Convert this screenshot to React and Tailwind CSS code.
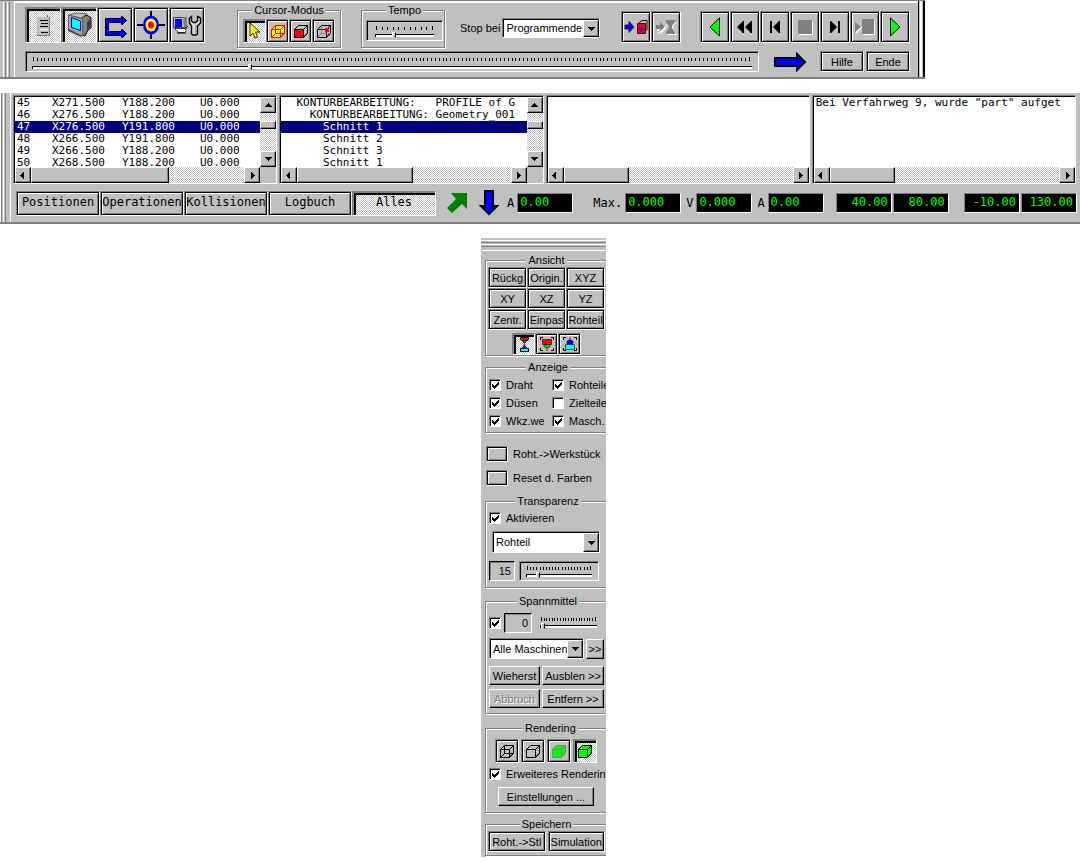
import React from "react";

const SANS = "font-['Liberation_Sans',sans-serif] text-[11px] leading-[14px]";
const MONO = "font-['DejaVu_Sans_Mono','Liberation_Mono',monospace] text-[12px] leading-[12px]";
const FRAME = "border border-t-[#808080] border-l-[#808080] border-b-white border-r-white";
const DITHER = "bg-[repeating-conic-gradient(#fff_0_25%,#c0c0c0_0_50%)] bg-[length:2px_2px]";
const UP = FRAME + " bg-[#c0c0c0] shadow-[inset_0_0_0_1px_#000,inset_2px_2px_0_#fff,inset_-2px_-2px_0_#808080]";
const DOWN = FRAME + " shadow-[inset_1px_1px_0_#808080,inset_3px_3px_0_#000]";
const SUNKEN = FRAME + " shadow-[inset_1px_1px_0_#000]";
const RAISED =
  "border border-t-white border-l-white border-b-black border-r-black bg-[#c0c0c0] shadow-[inset_-1px_-1px_0_#808080]";

function Btn({ pressed, className = "", children, ...rest }) {
  return (
    <button
      type="button"
      className={`flex shrink-0 items-center justify-center overflow-hidden whitespace-nowrap ${
        pressed ? DOWN + " " + DITHER : UP
      } ${className}`}
      {...rest}
    >
      {children}
    </button>
  );
}

function Group({ title, className = "", children }) {
  return (
    <fieldset
      className={`border border-[#808080] shadow-[1px_1px_0_#fff,inset_1px_1px_0_#fff] ${className}`}
    >
      <legend className="mx-auto bg-[#c0c0c0] px-[2px]">{title}</legend>
      {children}
    </fieldset>
  );
}

function Slider({ label, ticks, value, className = "", gap = "gap-[2px]" }) {
  return (
    <div className={`flex flex-col ${gap} ${className}`}>
      <div className="flex h-[4px] items-end justify-between px-px" aria-hidden="true">
        {Array.from({ length: ticks }, (_, i) => (
          <span key={i} className="h-[3px] w-px bg-black first:h-[4px] last:h-[4px]" />
        ))}
      </div>
      <input
        type="range"
        aria-label={label}
        defaultValue={value}
        className="block h-[7px] w-full min-w-0 appearance-none bg-transparent [&::-webkit-slider-runnable-track]:h-[3px] [&::-webkit-slider-runnable-track]:border-t [&::-webkit-slider-runnable-track]:border-l [&::-webkit-slider-runnable-track]:border-black [&::-webkit-slider-runnable-track]:bg-white [&::-webkit-slider-thumb]:-mt-[3px] [&::-webkit-slider-thumb]:h-[6px] [&::-webkit-slider-thumb]:w-[4px] [&::-webkit-slider-thumb]:appearance-none [&::-webkit-slider-thumb]:border [&::-webkit-slider-thumb]:border-t-white [&::-webkit-slider-thumb]:border-l-white [&::-webkit-slider-thumb]:border-r-black [&::-webkit-slider-thumb]:border-b-[#c0c0c0] [&::-webkit-slider-thumb]:bg-[#c0c0c0]"
      />
    </div>
  );
}

function Select({ id, label, value, className = "" }) {
  return (
    <div className={`relative ${SUNKEN} bg-white ${className}`}>
      <select
        id={id}
        aria-label={label}
        className="block h-full w-full appearance-none bg-transparent pr-4 pl-[3px] outline-none"
      >
        <option>{value}</option>
      </select>
      <span
        aria-hidden="true"
        className={`pointer-events-none absolute top-px right-0 bottom-0 flex w-4 items-center justify-center ${RAISED}`}
      >
        <svg width="7" height="4" viewBox="0 0 7 4" shapeRendering="crispEdges">
          <path d="M0 0h7v1H6v1H5v1H4v1H3V3H2V2H1V1H0z" />
        </svg>
      </span>
    </div>
  );
}

function Check({ label, checked, className = "" }) {
  return (
    <label className={`flex items-center gap-[5px] overflow-hidden whitespace-nowrap ${className}`}>
      <span className="relative flex h-3 w-3 shrink-0">
        <input
          type="checkbox"
          defaultChecked={checked}
          aria-label={label ? undefined : "Spannmittel"}
          className="peer h-3 w-3 appearance-none border border-t-[#808080] border-l-[#808080] border-b-white border-r-white bg-white shadow-[inset_1px_1px_0_#000]"
        />
        <svg
          width="7"
          height="7"
          viewBox="0 0 7 7"
          shapeRendering="crispEdges"
          className="pointer-events-none absolute top-[3px] left-[3px] hidden peer-checked:block"
        >
          <path d="M0 2h1v1h1v1h1V3h1V2h1V1h1V0h1v3H6v1H5v1H4v1H3v1H2V6H1V5H0z" />
        </svg>
      </span>
      {label && <span>{label}</span>}
    </label>
  );
}

/* ---------- icons ---------- */

const DocIcon = () => (
  <svg width="32" height="32" viewBox="0 0 32 32" shapeRendering="crispEdges">
    <path fill="#c0c0c0" d="M10 8h13v19H10z" />
    <path fill="#808080" d="M10 25h1v2h-1zM22 8h1v19h-1zM11 26h12v1H11z" />
    <path fill="#008080" d="M20 6h1v2h-1z" />
    <path d="M13 11h8v1h-8zM14 14h7v1h-7zM13 17h8v1h-8zM14 23h7v1h-7z" />
    <path fill="#fff" d="M13 20h8v1h-8z" />
  </svg>
);
const MonitorIcon = () => (
  <svg width="32" height="32" viewBox="0 0 32 32">
    <path fill="#808080" stroke="#000" d="M18 9l6-3 4 3v10l-3 2-3 6-4-2z" />
    <path fill="#c0c0c0" stroke="#606060" d="M6 6l7-2 11 1-6 4z" />
    <path fill="#a8a8a8" stroke="#606060" d="M5.500 6l14 4v16.500l-3-.5-11-6z" />
    <path fill="#404040" d="M5 20l14 7-1 1L5 22zM24 13l3-3v8l-3 3z" />
    <path fill="#0ff" stroke="#0000c0" d="M8.500 8.500l9 3.500v9.500l-9-3z" />
  </svg>
);
const LoopIcon = () => (
  <svg width="32" height="32" viewBox="0 0 32 32">
    <path
      fill="#00f"
      stroke="#000"
      d="M6.500 9.500h16v-2h1l4 4-4 4h-1v-2H9.500v9h13v-2h1l4 4-4 4h-1v-2h-16z"
    />
  </svg>
);
const TargetIcon = () => (
  <svg width="32" height="32" viewBox="0 0 32 32">
    <path d="M15 2h2v28h-2zM2 15h28v2H2z" />
    <ellipse cx="16" cy="16" rx="8" ry="9.500" fill="#00f" />
    <ellipse cx="16" cy="16" rx="5.500" ry="6.500" fill="#ff0" />
    <ellipse cx="16" cy="16" rx="3" ry="3.500" fill="#f00" />
  </svg>
);
const SetupIcon = () => (
  <svg width="32" height="32" viewBox="0 0 32 32">
    <path fill="#c0c0c0" stroke="#404040" d="M2.500 8.500h10l3 2v8h-13z" />
    <path fill="#808080" d="M12 8h4v12h-3z" />
    <path fill="#00f" d="M4 10h7v8H4z" />
    <path fill="#fff" stroke="#404040" d="M3.500 19.500h10l2 2-2 2h-6z" />
    <path stroke="#000" strokeWidth="1" d="M6 24h9M13 20l4-3" fill="none" />
    <path
      fill="#d8d8d8"
      stroke="#000"
      strokeWidth="1.400"
      d="M18.500 9l2-1.500V12l2 1.500h2l2-1.500V7.500l3 1.500v5l-3 3v8l-1.500 1h-3L20.500 25v-8l-2-3z"
    />
    <path stroke="#808080" d="M25 16v9" />
  </svg>
);
const CursorIcon = () => (
  <svg width="12" height="18" viewBox="0 0 12 18">
    <path fill="#ff0" stroke="#000" strokeWidth=".8" d="M1 1v13l3-3 2 5 2.500-1-2-5H11z" />
  </svg>
);

function Cube({ size = 16, line = "#000", front = "none", sides = "none", hidden, children }) {
  return (
    <svg width={size} height={size} viewBox="0 0 16 16" fill="none" stroke={line} strokeLinejoin="round">
      <path fill={sides} d="M1.500 6.500l4-4h9v7.500l-4 4v-7.500z" />
      <path fill={front} d="M1.500 6.500h9v8h-9z" />
      <path d="M10.500 6.500l4-4M14.500 2.500v8l-4 4" />
      {hidden && <path stroke={hidden} d="M5.500 2.500v8h9M5.500 10.500l-4 4" />}
      {children}
    </svg>
  );
}

const StopPartIcon = () => (
  <svg width="24" height="16" viewBox="0 0 24 16">
    <path fill="#00f" stroke="#000" strokeWidth=".8" d="M1 6h4V2.500l5 5.500-5 5.500V10H1z" />
    <path fill="none" stroke="#000" d="M15 4l3-2.500h5v10" />
    <path fill="#f00" stroke="#000" strokeWidth=".8" d="M13.500 4.500h8v10h-8z" />
    <path stroke="#00f" d="M17.500 7v6M14.500 10h6" />
  </svg>
);
const StopToolIcon = () => (
  <svg width="22" height="17" viewBox="0 0 22 17">
    <path fill="#fff" d="M2 7h4V3.500L11 9l-5 6v-3H2zM12 3h9l-3 5 3 8h-9l3-7z" />
    <path fill="#808080" d="M1 6h4V2.500L10 8l-5 5v-3H1zM11 1h9v2l-3 4v2l3 4v2h-9v-2l3-4V7l-3-4z" />
    <path stroke="#fff" d="M3 15l9-9" />
  </svg>
);

const PlayBack = () => (
  <svg width="12" height="20" viewBox="0 0 12 20">
    <path fill="#0f0" stroke="#000" d="M10.500 1v18L1 10z" />
  </svg>
);
const PlayForward = () => (
  <svg width="12" height="20" viewBox="0 0 12 20">
    <path fill="#0f0" stroke="#000" d="M1.500 1v18L11 10z" />
  </svg>
);
const Rewind = () => (
  <svg width="16" height="12" viewBox="0 0 16 12">
    <path d="M0 6l6-6h1v12H6zM8 6l6-6h1v12h-1z" />
  </svg>
);
const StepBack = () => (
  <svg width="10" height="12" viewBox="0 0 10 12">
    <path d="M0 0h2v12H0zM3 6l6-6h1v12H9z" />
  </svg>
);
const StepForward = () => (
  <svg width="10" height="12" viewBox="0 0 10 12">
    <path d="M8 0h2v12H8zM7 6L1 0H0v12h1z" />
  </svg>
);
const StopIcon = () => (
  <svg width="15" height="15" viewBox="0 0 15 15" shapeRendering="crispEdges">
    <path fill="#fff" d="M1 1h14v14H1z" />
    <path fill="#808080" d="M0 0h14v14H0z" />
  </svg>
);
const SkipStopIcon = () => (
  <svg width="20" height="16" viewBox="0 0 20 16">
    <path fill="#fff" d="M8 1h12v15H8z" />
    <path fill="#808080" d="M0 3l6 5-6 5zM7 0h12v15H7z" />
    <path stroke="#fff" strokeWidth="1.500" d="M1 14l6-6" />
  </svg>
);
const BlueRight = () => (
  <svg width="34" height="20" viewBox="0 0 34 20">
    <path fill="#00f" stroke="#000" strokeWidth="2" d="M2 6h22V2l8 8-8 8v-4H2z" />
  </svg>
);
const BlueDown = () => (
  <svg width="20" height="26" viewBox="0 0 20 26">
    <path fill="#00f" stroke="#000" strokeWidth="2" d="M6 1h8v15h4l-8 8-8-8h4z" />
  </svg>
);
const GreenUp = () => (
  <svg width="22" height="20" viewBox="0 0 22 20">
    <path fill="#008000" d="M5 0h16v16l-5-5-10 9-5-5L10 6z" />
  </svg>
);

const GuidesIcon = () => (
  <svg width="14" height="18" viewBox="0 0 14 18">
    <path stroke="#f00" d="M7.500 6v6" />
    <path fill="#f00" stroke="#000" d="M3.500 2.500h8v2l-1.500 1H5l-1.500-1z" />
    <path fill="#0c0" stroke="#000" strokeWidth=".8" d="M5.500 5.500h4L8 8H7z" />
    <path fill="#00f" stroke="#000" strokeWidth=".8" d="M7 10.500h1l2 3H5z" />
    <path fill="#0ff" stroke="#000" d="M3.500 13.500h8v3h-8z" />
  </svg>
);
const corners = "M1.500 4V1.500H4M12 1.500h2.500V4M14.500 12v2.500H12M4 14.500H1.500V12";
const UpperGuideIcon = () => (
  <svg width="16" height="16" viewBox="0 0 16 16" fill="none">
    <path stroke="#000" d={corners} />
    <path fill="#f00" stroke="#000" strokeWidth=".6" d="M3.500 3.500h9v5h-9z" />
    <path fill="#0c0" stroke="#000" strokeWidth=".6" d="M5 8.500h6v2l-1.500 1.500h-3L5 10.500z" />
    <path stroke="#f00" d="M8 12v3" />
  </svg>
);
const LowerGuideIcon = () => (
  <svg width="16" height="16" viewBox="0 0 16 16" fill="none">
    <path stroke="#000" d={corners} />
    <path stroke="#f00" d="M8 1v3" />
    <path fill="#00f" stroke="#000" strokeWidth=".6" d="M5 8.500v-3L6.500 4h3L11 5.500v3z" />
    <path fill="#0ff" stroke="#000" strokeWidth=".6" d="M3.500 8.500h9v5h-9z" />
  </svg>
);

/* ---------- list panes ---------- */

const ARROWS = {
  up: "M4 2h1v1h1v1h1v1h1v1H1V5h1V4h1V3h1z",
  down: "M1 2h7v1H7v1H6v1H5v1H4V5H3V4H2V3H1z",
  left: "M5 1v7H4V7H3V6H2V5H1V4h1V3h1V2h1V1z",
  right: "M3 1v7h1V7h1V6h1V5h1V4H6V3H5V2H4V1z",
};
function ScrollBtn({ dir }) {
  return (
    <button
      type="button"
      aria-label={dir}
      className={`flex h-4 w-4 shrink-0 items-center justify-center ${RAISED}`}
    >
      <svg width="9" height="9" viewBox="0 0 9 9" shapeRendering="crispEdges">
        <path d={ARROWS[dir]} />
      </svg>
    </button>
  );
}

function Pane({ vertical, thumb, children }) {
  return (
    <section className={`min-w-0 flex-1 ${FRAME}`}>
      <div className="border-t border-l border-black">
        <div className="flex h-[70px] bg-white">
          <div className="min-w-0 flex-1 overflow-hidden text-[11px] leading-[12px] whitespace-pre">
            {children}
          </div>
          {vertical && (
            <div className={`flex w-4 shrink-0 flex-col ${DITHER}`}>
              <ScrollBtn dir="up" />
              <div className={`mt-2 h-2 ${RAISED}`} />
              <div className="flex-1" />
              <ScrollBtn dir="down" />
            </div>
          )}
        </div>
        <div className="flex bg-[#c0c0c0]">
          <div className={`flex min-w-0 flex-1 ${DITHER}`}>
            <ScrollBtn dir="left" />
            <div className={`h-4 ${thumb} ${RAISED}`} />
            <div className="flex-1" />
            <ScrollBtn dir="right" />
          </div>
          {vertical && <div className="w-4" />}
        </div>
      </div>
    </section>
  );
}

const POSITIONS = [
  ["45", "X271.500", "Y188.200", "U0.000"],
  ["46", "X276.500", "Y188.200", "U0.000"],
  ["47", "X276.500", "Y191.800", "U0.000"],
  ["48", "X266.500", "Y191.800", "U0.000"],
  ["49", "X266.500", "Y188.200", "U0.000"],
  ["50", "X268.500", "Y188.200", "U0.000"],
];
const OPERATIONS = [
  "  KONTURBEARBEITUNG:   PROFILE of G",
  "    KONTURBEARBEITUNG: Geometry_001",
  "      Schnitt 1",
  "      Schnitt 2",
  "      Schnitt 3",
  "      Schnitt 1",
];

function Readout({ id, label, value, right }) {
  return (
    <div className="flex items-center gap-[3px]">
      {label && <label htmlFor={id}>{label}</label>}
      <input
        id={id}
        readOnly
        aria-label={label ? undefined : id}
        value={value}
        className={`h-5 w-14 border border-t-[#808080] border-l-[#808080] border-b-white border-r-white bg-black pr-[3px] pb-[3px] pl-[2px] text-[#00ff00] outline-none ${
          right ? "text-right" : ""
        }`}
      />
    </div>
  );
}

function TopToolbar() {
  return (
    <header className="flex w-full max-w-[925px] border-t border-b-2 border-[#808080] bg-[#c0c0c0]">
      <div className="flex w-[15px] shrink-0 gap-px border-r border-white pt-px pl-[3px]">
        <span className="w-[3px] border-r border-l border-r-[#808080] border-l-white" />
        <span className="w-[3px] border-r border-l border-r-[#808080] border-l-white" />
      </div>
      <div className="flex min-w-0 flex-1 flex-col gap-[3px] border-t-2 border-white pr-2 pb-[5px] pl-[10px]">
        <div className="flex items-end">
          <div className="mb-[5px] flex">
            <Btn pressed className="h-9 w-9" aria-label="Protokoll"><DocIcon /></Btn>
            <Btn pressed className="h-9 w-9" aria-label="Monitor"><MonitorIcon /></Btn>
            <Btn className="h-9 w-9" aria-label="Wiederholen"><LoopIcon /></Btn>
            <Btn className="h-9 w-9" aria-label="Ziel"><TargetIcon /></Btn>
            <Btn className="h-9 w-9" aria-label="Setup"><SetupIcon /></Btn>
          </div>
          <Group title="Cursor-Modus" className="ml-8 px-[5px] pt-[2px] pb-1">
            <div className="flex">
              <Btn pressed className="h-6 w-[23px]" aria-label="Auswahl"><CursorIcon /></Btn>
              <Btn className="h-6 w-[23px]" aria-label="Körper">
                <Cube line="#f00" front="#ff0" sides="#ff0" hidden="#f00" />
              </Btn>
              <Btn className="h-6 w-[23px]" aria-label="Fläche"><Cube front="#f00" /></Btn>
              <Btn className="h-6 w-[23px]" aria-label="Punkt">
                <Cube hidden="#808080">
                  <path fill="#f00" stroke="none" d="M9 5h4v4H9z" />
                </Cube>
              </Btn>
            </div>
          </Group>
          <Group title="Tempo" className="ml-5 pt-[3px] pr-px pb-[6px] pl-1">
            <div className={`h-[21px] w-[77px] px-2 pt-[5px] ${SUNKEN}`}>
              <Slider label="Tempo" ticks={11} value={30} />
            </div>
          </Group>
          <div className="mb-[10px] ml-[15px] flex items-center gap-[2px]">
            <label htmlFor="stop" className="whitespace-nowrap">Stop bei</label>
            <Select id="stop" value="Programmende" className="h-5 w-[98px]" />
          </div>
          <div className="mb-[5px] ml-[21px] flex">
            <Btn className="h-8 w-[30px]" aria-label="Stop bei Teil"><StopPartIcon /></Btn>
            <Btn className="h-8 w-[30px]" aria-label="Stop bei Werkzeug"><StopToolIcon /></Btn>
          </div>
          <div className="mb-[5px] ml-auto flex">
            <Btn className="h-8 w-[30px]" aria-label="Abspielen rückwärts"><PlayBack /></Btn>
            <Btn className="h-8 w-[30px]" aria-label="Zurückspulen"><Rewind /></Btn>
            <Btn className="h-8 w-[30px]" aria-label="Schritt zurück"><StepBack /></Btn>
            <Btn className="h-8 w-[30px]" aria-label="Stop"><StopIcon /></Btn>
            <Btn className="h-8 w-[30px]" aria-label="Schritt vor"><StepForward /></Btn>
            <Btn className="h-8 w-[30px]" aria-label="Bis Stop"><SkipStopIcon /></Btn>
            <Btn className="h-8 w-[30px]" aria-label="Abspielen"><PlayForward /></Btn>
          </div>
        </div>
        <div className="flex items-center">
          <div className={`h-[21px] min-w-0 flex-1 px-[6px] pt-[5px] ${SUNKEN}`}>
            <Slider label="Fortschritt" ticks={188} value={30} gap="gap-[3px]" />
          </div>
          <div className="mr-[13px] ml-[14px] flex w-[34px] justify-center"><BlueRight /></div>
          <div className="flex gap-[2px]">
            <Btn className="h-[21px] w-11">Hilfe</Btn>
            <Btn className="h-[21px] w-11">Ende</Btn>
          </div>
        </div>
      </div>
      <div className="flex w-[7px] shrink-0 border-r-2 border-l border-black">
        <span className="ml-px w-[2px] bg-white" />
      </div>
    </header>
  );
}

function Monitor() {
  const tabs = ["Positionen", "Operationen", "Kollisionen", "Logbuch", "Alles"];
  return (
    <main className={`flex border-b-2 border-[#808080] bg-[#c0c0c0] ${MONO}`}>
      <div className="flex w-[11px] shrink-0 gap-px border-r border-white">
        <span className="w-[2px] border-r border-[#808080] bg-white" />
        <span className="w-[3px] border-r border-l border-r-[#808080] border-l-white" />
      </div>
      <div className="min-w-0 flex-1 pt-[2px] pr-[3px] pb-[6px] pl-[2px]">
        <div className="flex gap-[2px] pr-px">
          <Pane vertical thumb="w-[138px]">
            <table className="w-full table-fixed border-collapse">
              <tbody>
                {POSITIONS.map((row) => (
                  <tr key={row[0]} className={row[0] === "47" ? "bg-[#000080] text-white" : ""}>
                    <td className="h-3 w-[37px] p-0 pl-[2px] align-top">{row[0]}</td>
                    <td className="w-[70px] p-0 align-top">{row[1]}</td>
                    <td className="w-[78px] p-0 align-top">{row[2]}</td>
                    <td className="p-0 align-top">{row[3]}</td>
                  </tr>
                ))}
              </tbody>
            </table>
          </Pane>
          <Pane vertical thumb="w-[116px]">
            <ul>
              {OPERATIONS.map((text, i) => (
                <li key={i} className={`h-3 pl-[2px] ${i === 2 ? "bg-[#000080] text-white" : ""}`}>
                  {text}
                </li>
              ))}
            </ul>
          </Pane>
          <Pane thumb="w-[65px]" />
          <Pane thumb="w-[65px]">
            <p className="pl-[2px]">Bei Verfahrweg 9, wurde "part" aufget</p>
          </Pane>
        </div>
        <div className="mt-[6px] flex items-center pl-[3px]">
          <div className="flex">
            {tabs.map((t) => (
              <Btn key={t} pressed={t === "Alles"} className="h-[25px] w-[84px] pb-[3px]">
                {t}
              </Btn>
            ))}
          </div>
          <div className="ml-[10px] flex shrink-0 items-center gap-[11px]">
            <GreenUp />
            <BlueDown />
          </div>
          <div className="ml-2 flex min-w-0 flex-1 items-center">
            <Readout id="a1" label="A" value="0.00" />
            <div className="ml-5 flex items-center gap-[5px]">
              <Readout id="max" label="Max." value="0.000" />
              <Readout id="v" label="V" value="0.000" />
              <Readout id="a2" label="A" value="0.00" />
            </div>
            <div className="ml-3 flex gap-px">
              <Readout id="x1" value="40.00" right />
              <Readout id="x2" value="80.00" right />
            </div>
            <div className="ml-auto flex gap-px">
              <Readout id="z1" value="-10.00" right />
              <Readout id="z2" value="130.00" right />
            </div>
          </div>
        </div>
      </div>
    </main>
  );
}

const VIEWS = ["Rückg", "Origin.", "XYZ", "XY", "XZ", "YZ", "Zentr.", "Einpas", "Rohteil"];
const SIDE_GROUP = "mr-[-2px] ml-[4px]";
const FLAT = RAISED + " flex items-center justify-center overflow-hidden whitespace-nowrap";
const VALUE_BOX =
  "border border-t-black border-l-black border-b-white border-r-white bg-[#c0c0c0] pr-[3px] text-right outline-none shadow-[inset_1px_1px_0_#808080]";

function SidePanel() {
  return (
    <aside className="flex w-[125px] flex-col overflow-hidden bg-[#c0c0c0] pb-px">
      <div className="flex h-[13px] flex-col gap-px border-b border-white pt-[2px]">
        <span className="h-[3px] border-t border-b border-t-white border-b-[#808080]" />
        <span className="h-[3px] border-t border-b border-t-white border-b-[#808080]" />
      </div>

      <Group title="Ansicht" className={`mt-[2px] ${SIDE_GROUP} px-[2px]`}>
        <div className="grid grid-cols-3">
          {VIEWS.map((v) => (
            <Btn key={v} className="h-[21px]">{v}</Btn>
          ))}
        </div>
        <div className="mt-[3px] flex justify-center">
          <Btn pressed className="h-[22px] w-[23px]" aria-label="Beide Düsen"><GuidesIcon /></Btn>
          <Btn className="h-[22px] w-[23px]" aria-label="Obere Düse"><UpperGuideIcon /></Btn>
          <Btn className="h-[22px] w-[23px]" aria-label="Untere Düse"><LowerGuideIcon /></Btn>
        </div>
      </Group>

      <Group title="Anzeige" className={`mt-[4px] ${SIDE_GROUP} pt-1 pb-[4px] pl-[3px]`}>
        <div className="grid grid-cols-[55px_1fr] gap-x-2 gap-y-[4px]">
          <Check label="Draht" checked />
          <Check label="Rohteile" checked />
          <Check label="Düsen" checked />
          <Check label="Zielteile" />
          <Check label="Wkz.weg" checked />
          <Check label="Masch." checked />
        </div>
      </Group>

      <div className="mt-[13px] flex flex-col gap-2 pl-[5px]">
        {["Roht.->Werkstück", "Reset d. Farben"].map((t, i) => (
          <div key={t} className="flex items-center gap-[5px]">
            <button type="button" aria-labelledby={`color${i}`} className={`h-4 w-[22px] ${UP}`} />
            <span id={`color${i}`} className="whitespace-nowrap">{t}</span>
          </div>
        ))}
      </div>

      <Group title="Transparenz" className={`mt-[8px] ${SIDE_GROUP} pt-[3px] pb-[6px] pl-[3px]`}>
        <Check label="Aktivieren" checked />
        <Select label="Transparenz" value="Rohteil" className="mt-[6px] ml-[3px] h-[22px] w-[108px]" />
        <div className="mt-[8px] flex gap-1">
          <input aria-label="Transparenzwert" defaultValue="15" className={`h-5 w-[26px] ${VALUE_BOX}`} />
          <div className={`h-5 w-20 px-[6px] pt-[4px] ${SUNKEN}`}>
            <Slider label="Transparenz einstellen" ticks={21} value={15} />
          </div>
        </div>
      </Group>

      <Group title="Spannmittel" className={`mt-[6px] ${SIDE_GROUP} pt-[5px] pb-[5px] pl-[3px]`}>
        <div className="flex items-center">
          <Check checked />
          <input aria-label="Spannmittelwert" defaultValue="0" className={`ml-[3px] h-5 w-[28px] ${VALUE_BOX}`} />
          <Slider label="Spannmittel einstellen" ticks={21} value={0} className="ml-[8px] w-[57px]" />
        </div>
        <div className="mt-[5px] flex items-center gap-[2px]">
          <Select label="Maschinenauswahl" value="Alle Maschinen" className="h-[21px] w-[95px]" />
          <button type="button" className={`h-5 w-[18px] ${FLAT}`}>&gt;&gt;</button>
        </div>
        <div className="mt-[7px] grid grid-cols-[51px_62px] gap-x-[2px] gap-y-1">
          <button type="button" className={`h-[19px] ${FLAT}`}>Wieherst</button>
          <button type="button" className={`h-[19px] ${FLAT}`}>Ausblen &gt;&gt;</button>
          <button
            type="button"
            disabled
            className={`h-[19px] text-[#808080] [text-shadow:1px_1px_0_#fff] ${FLAT}`}
          >
            Abbruch
          </button>
          <button type="button" className={`h-[19px] ${FLAT}`}>Entfern &gt;&gt;</button>
        </div>
      </Group>

      <Group title="Rendering" className={`mt-[7px] ${SIDE_GROUP} pt-1 pb-[6px] pl-[3px]`}>
        <div className="ml-[6px] flex gap-[2px]">
          <Btn className="h-6 w-6" aria-label="Drahtmodell"><Cube hidden="#000" /></Btn>
          <Btn className="h-6 w-6" aria-label="Kanten"><Cube /></Btn>
          <Btn className="h-6 w-6" aria-label="Flächen"><Cube line="#808080" front="#0f0" sides="#0f0" /></Btn>
          <Btn pressed className="h-6 w-6" aria-label="Flächen und Kanten"><Cube front="#0f0" sides="#0f0" /></Btn>
        </div>
        <Check label="Erweiteres Rendering" checked className="mt-1" />
        <button type="button" className={`mt-[6px] ml-[9px] h-[19px] w-24 ${FLAT}`}>
          Einstellungen ...
        </button>
      </Group>

      <Group title="Speichern" className={`mt-[4px] ${SIDE_GROUP} px-[2px] pb-[3px]`}>
        <div className="grid grid-cols-2 gap-x-[2px]">
          <Btn className="h-[21px]">Roht.-&gt;Stl</Btn>
          <Btn className="h-[21px]">Simulation</Btn>
        </div>
      </Group>
    </aside>
  );
}

export default function App() {
  return (
    <div className={`flex min-h-screen flex-col gap-[14px] bg-white text-black ${SANS}`}>
      <TopToolbar />
      <Monitor />
      <div className="flex justify-center pl-[7px]">
        <SidePanel />
      </div>
    </div>
  );
}
